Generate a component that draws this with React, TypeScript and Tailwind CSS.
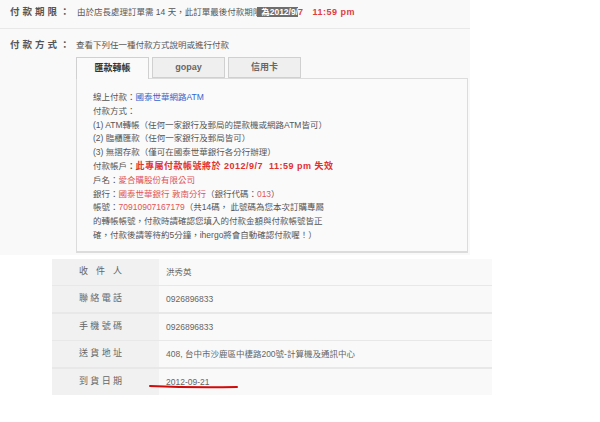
import React, { useState } from 'react';

const FONT = { fontFamily: '"Liberation Sans", "Noto Sans CJK TC", sans-serif' };

const tabs = ['匯款轉帳', 'gopay', '信用卡'];

const rows = [
  { label: '收件人', value: '洪秀英', thick: false },
  { label: '聯絡電話', value: '0926896833', thick: false },
  { label: '手機號碼', value: '0926896833', thick: true },
  { label: '送貨地址', value: '408, 台中市沙鹿區中棲路200號-計算機及通訊中心', thick: false },
  { label: '到貨日期', value: '2012-09-21', thick: true, marked: true },
];

const FieldLabel: React.FC<{ children: React.ReactNode }> = ({ children }) => (
  <span className="w-[66px] shrink-0 whitespace-nowrap font-bold text-[9.5px] text-[#555] tracking-[3px]">
    {children}
  </span>
);

const App: React.FC = () => {
  const [activeTab, setActiveTab] = useState(0);

  return (
    <div className="w-[600px] h-[422px] bg-white text-[#555]" style={FONT}>
      {/* payment panel */}
      <div className="w-[470px] bg-[#f9f9f9] pb-[2px]">
        <div className="h-[29px] flex items-center pl-[10px] pb-[3px] border-b border-[#e8e8e8]">
          <FieldLabel>付款期限：</FieldLabel>
          <span className="ml-[1px] text-[8.5px] whitespace-nowrap">
            由於店長處理訂單需 14 天，此訂單最後付款期限
            <span className="bg-[#6e6e6e] text-white font-bold pl-[4px] -ml-[4px]">為2012/9/</span>
            <span className="text-[#e03c3c] font-bold text-[9px] tracking-[0.5px]">7&nbsp;&nbsp;&nbsp;11:59 pm</span>
          </span>
        </div>

        <div className="h-[14px] mt-[9px] flex items-center pl-[10px]">
          <FieldLabel>付款方式：</FieldLabel>
          <span className="text-[8.5px] whitespace-nowrap">查看下列任一種付款方式說明或進行付款</span>
        </div>

        {/* tabs */}
        <div className="ml-[76px] mt-[5px] flex gap-[3px] h-[21px]">
          {tabs.map((t, i) => (
            <button
              key={t}
              onClick={() => setActiveTab(i)}
              className={
                i === activeTab
                  ? 'w-[73px] h-[22px] border border-b-0 border-[#d0d0d0] bg-[#fafafa] text-[9px] font-bold text-[#333] relative z-10'
                  : 'w-[73px] h-[21px] border border-[#d0d0d0] bg-[#efefef] text-[9px] font-bold text-[#666]'
              }
            >
              {t}
            </button>
          ))}
        </div>

        {/* bank transfer details */}
        <div className="ml-[76px] w-[392px] h-[175px] border border-[#dcdcdc] border-b-2 bg-[#fafafa] pt-[12px] pl-[16px] text-[8.5px] leading-[13.8px] whitespace-nowrap">
          <div>
            線上付款：<span className="text-[#3366cc]">國泰世華網路ATM</span>
          </div>
          <div>付款方式：</div>
          <div>(1) ATM轉帳（任何一家銀行及郵局的提款機或網路ATM皆可）</div>
          <div>(2) 臨櫃匯款（任何一家銀行及郵局皆可）</div>
          <div>(3) 無摺存款（僅可在國泰世華銀行各分行辦理）</div>
          <div>
            付款帳戶<b>：</b>
            <span className="text-[#e03030] font-bold text-[9px] tracking-[0.5px]">
              此專屬付款帳號將於 2012/9/7&nbsp;&nbsp;11:59 pm 失效
            </span>
          </div>
          <div>
            戶名：<span className="text-[#e05555]">愛合購股份有限公司</span>
          </div>
          <div>
            銀行：<span className="text-[#e05555]">國泰世華銀行 敦南分行</span>（銀行代碼：
            <span className="text-[#e05555]">013</span>）
          </div>
          <div>
            帳號：<span className="text-[#e05555]">70910907167179</span>（共14碼， 此號碼為您本次訂購專屬
          </div>
          <div>的轉帳帳號，付款時請確認您填入的付款金額與付款帳號皆正</div>
          <div>確，付款後請等待約5分鐘，ihergo將會自動確認付款喔！）</div>
        </div>
      </div>

      {/* shipping info */}
      <div className="ml-[52px] mt-[4px] w-[440px] bg-[#f9f9f9]">
        {rows.map((r, i) => (
          <div
            key={r.label}
            className={
              i === 0
                ? 'flex h-[26px]'
                : r.thick
                ? 'flex h-[28px] border-t-2 border-[#e8e8e8]'
                : 'flex h-[27px] border-t border-[#e8e8e8]'
            }
          >
            <div className="w-[107px] shrink-0 bg-[#f1f1f1] flex items-center pl-[27px]">
              <span className="w-[43px] text-[9px] text-[#666] [text-align-last:justify]">{r.label}</span>
            </div>
            <div className="relative flex items-center pl-[7px] text-[8.5px] text-[#666]">
              {r.value}
              {r.marked && (
                <svg className="absolute left-[-10px] top-[15px]" width="90" height="5" viewBox="0 0 90 5">
                  <path d="M1 2 Q 45 4 88 3" stroke="#d10a0a" strokeWidth="2" fill="none" strokeLinecap="round" />
                </svg>
              )}
            </div>
          </div>
        ))}
      </div>
    </div>
  );
};

export default App;
